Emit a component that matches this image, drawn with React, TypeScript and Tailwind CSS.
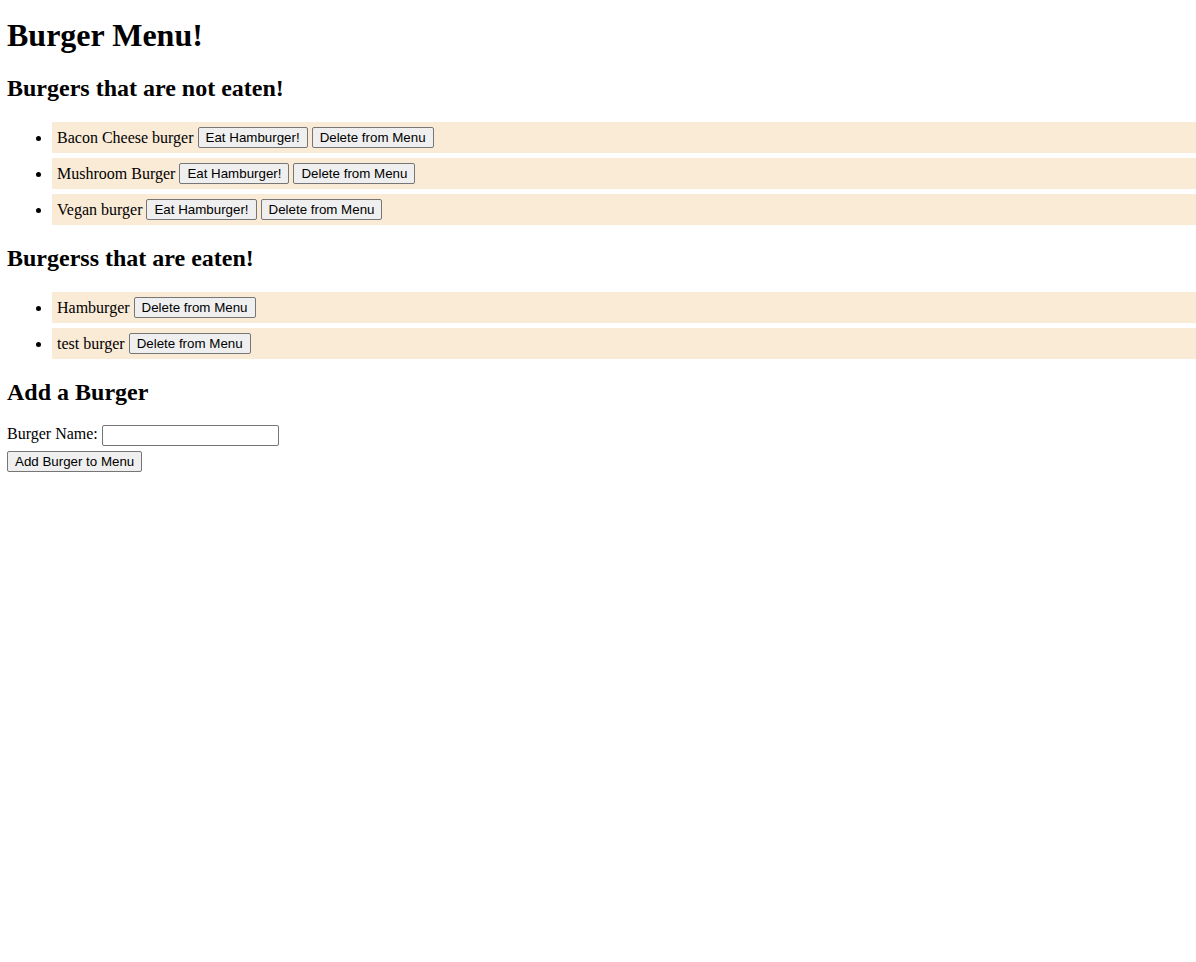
const notEaten = ['Bacon Cheese burger', 'Mushroom Burger', 'Vegan burger']
const eaten = ['Hamburger', 'test burger']

const Btn = ({ children }: { children: string }) => (
  <button className="inline-block align-top h-[21px] px-[7px] border border-[#767676] rounded-[2px] bg-[#efefef] text-[13.33px] leading-[19px] text-black font-['Liberation_Sans',Arial,sans-serif]">
    {children}
  </button>
)

const Row = ({ name, eat }: { name: string; eat?: boolean }) => (
  <li className="bg-[#faebd7] p-[5px] mb-[5px] leading-[21px]">
    {name}{' '}
    {eat && (
      <>
        <Btn>Eat Hamburger!</Btn>{' '}
      </>
    )}
    <Btn>Delete from Menu</Btn>
  </li>
)

export default function App() {
  return (
    <div className="pl-[7px] text-black text-[16px] font-['Liberation_Serif','Times_New_Roman',serif] bg-white min-h-screen">
      <h1 className="text-[32px] font-bold leading-[normal] mt-[17px] mb-[21.44px]">Burger Menu!</h1>
      <h2 className="text-[24px] font-bold leading-[normal] my-[19.92px]">Burgers that are not eaten!</h2>
      <ul className="list-disc pl-[45px] my-4">
        {notEaten.map((b) => (
          <Row key={b} name={b} eat />
        ))}
      </ul>
      <h2 className="text-[24px] font-bold leading-[normal] my-[19.92px]">Burgerss that are eaten!</h2>
      <ul className="list-disc pl-[45px] my-4">
        {eaten.map((b) => (
          <Row key={b} name={b} />
        ))}
      </ul>
      <h2 className="text-[24px] font-bold leading-[normal] mt-[19.92px] mb-[16px]">Add a Burger</h2>
      <form onSubmit={(e) => e.preventDefault()}>
        <label htmlFor="burger">Burger Name:</label>{' '}
        <input
          id="burger"
          type="text"
          className="align-middle w-[177px] h-[21px] border border-[#767676] rounded-[2px] px-[2px] text-[13.33px] font-['Liberation_Sans',Arial,sans-serif]"
        />
        <br />
        <button className="mt-[5px] h-[21px] px-[7px] border border-[#767676] rounded-[2px] bg-[#efefef] text-[13.33px] leading-[19px] font-['Liberation_Sans',Arial,sans-serif]">
          Add Burger to Menu
        </button>
      </form>
    </div>
  )
}
